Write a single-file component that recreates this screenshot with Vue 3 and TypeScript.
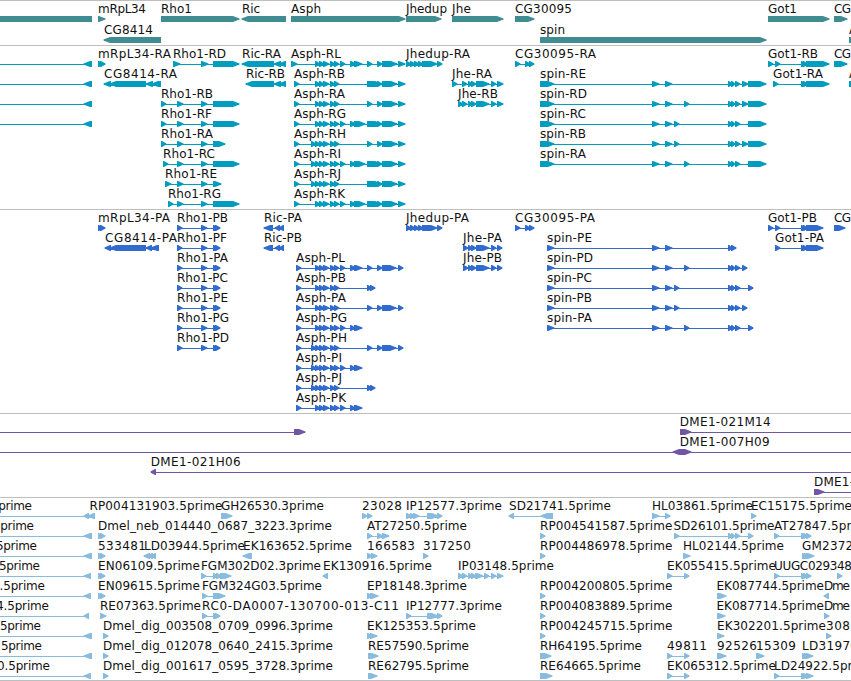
<template>
  <main class="browser">
    <section
      v-for="track in tracks"
      :key="track.name"
      class="track"
      :class="`track--${track.name}`"
    >
      <svg class="track__canvas" width="851" :height="track.height" :viewBox="`0 0 851 ${track.height}`">
        <g
          v-for="(feature, index) in track.features"
          :key="index"
          :transform="`translate(0 ${feature.row * track.pitch})`"
        >
          <path class="track__intron" :d="intron(feature)" />
          <path class="track__exon" :d="exons(feature)" />
          <text
            v-if="feature.label"
            class="track__label"
            :x="feature.textX"
            y="12"
            :textLength="feature.width"
          >{{ feature.label }}</text>
        </g>
      </svg>
    </section>
  </main>
</template>

<script setup lang="ts">
type Strand = '+' | '-' | '='

interface Feature {
  row: number
  label: string
  textX: number
  width: number
  strand: Strand
  blocks: number[][]
}

interface Track {
  name: string
  height: number
  pitch: number
  features: Feature[]
}

// advance widths of the 12px label font
const advances: Record<string, number> = {
  A: 8, B: 8, C: 8, D: 9, E: 8, F: 7, G: 9, H: 9, I: 4, J: 4, K: 8, L: 7, M: 10, N: 9,
  P: 7, R: 8, S: 8, T: 7, U: 9, d: 8, e: 7, g: 8, h: 8, i: 3, l: 3, m: 10, n: 8, b: 8,
  o: 7, p: 8, r: 5, s: 6, t: 5, u: 8, c: 7, '-': 5, '.': 4, _: 6
}

const measure = (label: string) =>
  [...label].reduce((sum, char) => sum + (advances[char] ?? 8), 0)

// blocks are written as "start~end start~end"
const f = (
  row: number,
  label: string,
  strand: Strand,
  blocks: string,
  width = measure(label),
  textX?: number
): Feature => {
  const parsed = blocks.split(' ').map(block => block.split('~').map(Number))
  return { row, label, strand, blocks: parsed, width, textX: textX ?? parsed[0][0] }
}

const intron = ({ blocks }: Feature) => `M${blocks[0][0]} 18.5H${blocks[blocks.length - 1][1]}`

const block = (start: number, end: number, strand: Strand) => {
  if (strand === '=') return `M${start} 15H${end}V21H${start}Z`
  const length = end - start
  const head = Math.min(length - 1, 6)
  if (strand === '+') {
    const neck = end - head
    return `M${start} 15H${neck}L${end + 0.5} 17.5V18.5L${neck} 21H${start}Z`
  }
  const neck = start + head
  return `M${end} 15H${neck}L${start - 0.5} 17.5V18.5L${neck} 21H${end}Z`
}

const exons = ({ blocks, strand }: Feature) =>
  blocks.map(([start, end]) => block(start, end, strand)).join('')

const genes = [
  f(0, '', '=', '-9~92'),
  f(0, 'mRpL34', '+', '98~105', 48),
  f(0, 'Rho1', '+', '161~239'),
  f(0, 'Ric', '-', '242~286'),
  f(0, 'Asph', '+', '291~405'),
  f(0, 'Jhedup', '+', '406~441', 41),
  f(0, 'Jhe', '+', '452~503'),
  f(0, 'CG30095', '+', '515~534'),
  f(0, 'Got1', '+', '768~829'),
  f(0, 'CG', '+', '834~847'),
  f(1, 'CG8414', '-', '104~161'),
  f(1, 'spin', '+', '540~766'),
  f(1, 'A', '+', '849~880')
]

const rhoTail = '177~183 201~207 213~239'
const asphCore = '315~320 319~324 323~329 330~335 334~339'
const asphEnd = '377~382 382~397 398~405'
const jheTail = '468~472 471~476 476~489 491~496 497~503'
const jhedup = '406~411 410~415 414~419 418~423 422~437 437~442'
const spinHead = '540~554 652~659 665~672'
const spinMid = '728~732 731~735 735~740'
const gotEnd = '801~805 803~807 806~829'

const transcripts = [
  ...[0, 1, 2, 3].map(row => f(row, '', '-', '-9~-2 84~92')),
  f(0, 'mRpL34-RA', '+', '98~103 100~105', 73),
  f(0, 'Rho1-RD', '+', '173~180 201~208 213~239'),
  f(0, 'Ric-RA', '-', '242~274 274~281 279~286'),
  f(0, 'Asph-RL', '+', `291~297 ${asphCore} 340~345 350~356 354~362 367~372 ${asphEnd}`),
  f(0, 'Jhedup-RA', '+', jhedup),
  f(0, 'CG30095-RA', '+', '515~520 525~530 529~534', 81),
  f(0, 'Got1-RB', '+', `768~773 775~780 ${gotEnd}`),
  f(0, 'CG', '+', '834~847'),
  f(1, 'CG8414-RA', '-', '104~111 110~146 146~153 152~161', 73),
  f(1, 'Ric-RB', '-', '246~274 274~281 279~286'),
  f(1, 'Asph-RB', '+', `294~299 ${asphCore} 367~381 ${asphEnd}`),
  f(1, 'Jhe-RA', '+', `452~457 462~467 ${jheTail}`),
  f(1, 'spin-RE', '+', `${spinHead} ${spinMid} 742~748 748~766`),
  f(1, 'Got1-RA', '+', `773~778 ${gotEnd}`),
  f(1, 'A', '+', '849~880'),
  f(2, 'Rho1-RB', '+', `161~166 ${rhoTail}`),
  f(2, 'Asph-RA', '+', `294~299 ${asphCore} 367~372 ${asphEnd}`),
  f(2, 'Jhe-RB', '+', `458~463 462~467 ${jheTail}`),
  f(2, 'spin-RD', '+', `${spinHead} 684~689 ${spinMid} 742~748 748~766`),
  f(3, 'Rho1-RF', '+', `161~166 ${rhoTail}`),
  f(3, 'Asph-RG', '+', `294~299 ${asphCore} 340~345 350~356 354~365 367~381 ${asphEnd}`),
  f(3, 'spin-RC', '+', `${spinHead} 674~679 ${spinMid} 748~766`),
  f(4, 'Rho1-RA', '+', '161~166 177~183 201~207 213~225'),
  f(4, 'Asph-RH', '+', `294~299 311~316 ${asphCore} 367~372 ${asphEnd}`),
  f(4, 'spin-RB', '+', `${spinHead} 674~679 ${spinMid} 742~748 748~766`),
  f(5, 'Rho1-RC', '+', `163~168 ${rhoTail}`),
  f(5, 'Asph-RI', '+', `294~299 311~316 ${asphCore} 340~345 350~356 354~365 367~381 ${asphEnd}`),
  f(5, 'spin-RA', '+', `${spinHead} 684~689 ${spinMid} 748~766`),
  f(6, 'Rho1-RE', '+', '165~171 177~183 201~207 213~221'),
  f(6, 'Asph-RJ', '+', `294~299 311~316 ${asphCore} 367~381 ${asphEnd}`),
  f(7, 'Rho1-RG', '+', `168~173 ${rhoTail}`),
  f(7, 'Asph-RK', '+', `294~299 ${asphCore} 340~345 350~356 354~365 367~381 ${asphEnd}`)
]

const asphCds = '377~382 382~396 398~403'
const jheCds = '463~468 468~472 471~476 476~489 491~496 497~502'
const spinCds = '547~554 652~659 665~672'
const gotCds = '801~805 803~807 806~823'

const proteins = [
  f(0, 'mRpL34-PA', '+', '98~103 100~105', 72),
  f(0, 'Ric-PA', '-', '264~273 275~280 279~284'),
  f(0, 'Jhedup-PA', '+', jhedup),
  f(0, 'CG30095-PA', '+', '515~520 525~530 529~534', 80),
  f(0, 'Got1-PB', '+', `768~773 775~780 ${gotCds}`),
  f(0, 'CG', '+', '834~845'),
  f(1, 'CG8414-PA', '-', '105~111 110~146 146~152 151~159', 72),
  f(1, 'Ric-PB', '-', '264~273 275~280 279~284'),
  f(1, 'Jhe-PA', '+', jheCds),
  f(1, 'spin-PE', '+', `${spinCds} 728~732 731~736`),
  f(1, 'Got1-PA', '+', `775~780 ${gotCds}`),
  ...['PB', 'PF', 'PA', 'PC', 'PE', 'PG', 'PD'].map((name, row) =>
    f(row, `Rho1-${name}`, '+', '177~182 201~207 213~218 215~220')
  ),
  f(2, 'Asph-PL', '+', `296~301 ${asphCore} 340~345 350~356 354~362 367~372 ${asphCds}`),
  f(2, 'Jhe-PB', '+', jheCds),
  f(2, 'spin-PD', '+', `${spinCds} 684~689 ${spinMid} 742~747`),
  f(3, 'Asph-PB', '+', `296~301 ${asphCore} 367~372 370~375`),
  f(3, 'spin-PC', '+', `${spinCds} 674~679 ${spinMid} 748~753`),
  f(4, 'Asph-PA', '+', `296~301 ${asphCore} 367~372 ${asphCds}`),
  f(4, 'spin-PB', '+', `${spinCds} 674~679 ${spinMid} 742~747`),
  f(5, 'Asph-PG', '+', `296~301 ${asphCore} 340~345 350~355 354~362`),
  f(5, 'spin-PA', '+', `${spinCds} 684~689 ${spinMid} 748~753`),
  f(6, 'Asph-PH', '+', `296~301 311~316 ${asphCore} 367~372 ${asphCds}`),
  f(7, 'Asph-PI', '+', `296~301 311~316 ${asphCore} 340~345 350~355 354~362`),
  f(8, 'Asph-PJ', '+', `296~301 311~316 ${asphCore} 367~372 370~375`),
  f(9, 'Asph-PK', '+', `296~301 ${asphCore} 340~345 350~355 354~362`)
]

const bacs = [
  f(0, '', '+', '-20~-10 294~305'),
  f(0, 'DME1-021M14', '+', '680~691 870~880', 91, 679.7),
  f(1, '', '-', '673~682'),
  f(1, 'DME1-007H09', '+', '-20~-10 680~691 870~880', 90, 679.7),
  f(2, 'DME1-021H06', '-', '151~156 870~880', 90, 150.7),
  f(3, 'DME1-', '+', '814~824 870~880')
]

const leftEnds = [32, 34, 37, 40, 45, 49, 41, 42, 50]
const leftLabels = ['5prime', '5prime', '5prime', '5prime', '1.5prime', '4.5prime', '5prime', '5prime', '0.5prime']
const leftTips = ['84~89 88~95', '84~92', '84~92', '84~91', '84~91', '84~89', '84~92', '84~92', '84~91']
const mrplTip = '98~103 100~105'

const ests = [
  ...leftLabels.map((label, row) =>
    f(row, label, '-', `-20~-10 ${leftTips[row]}`, measure(label), leftEnds[row] - measure(label))
  ),
  f(0, 'RP004131903.5prime', '-', '90~95', 133, 89.5),
  f(0, 'GH26530.3prime', '+', '221~232'),
  f(0, '23028', '+', '362~367 367~372'),
  f(0, 'IP12577.3prime', '+', '406~411 410~415 413~419 427~438 437~442'),
  f(0, 'SD21741.5prime', '-', '509~514 541~553'),
  f(0, 'HL03861.5prime', '+', '652~659 665~670'),
  f(0, 'EC15175.5prime', '+', '751~756'),
  f(1, 'Dmel_neb_014440_0687_3223.3prime', '+', mrplTip, 234),
  f(1, 'AT27250.5prime', '+', '367~372 377~383 382~389'),
  f(1, 'RP004541587.5prime', '+', '540~545', 132.5),
  f(1, 'SD26101.5prime', '+', '674~679 728~732 731~735 735~740 748~753', 101, 673.5),
  f(1, 'AT27847.5prime', '+', '774~779 801~805 803~808 806~811'),
  f(2, '533481', '+', mrplTip),
  f(2, 'LD03944.5prime', '-', '144~150 148~153 151~156'),
  f(2, 'EK163652.5prime', '-', '243~252'),
  f(2, '166583', '+', '367~373 371~377'),
  f(2, '317250', '+', '423~428'),
  f(2, 'RP004486978.5prime', '+', '540~545', 132.5),
  f(2, 'HL02144.5prime', '+', '683~690'),
  f(2, 'GM23721', '+', '802~806 804~809 806~814'),
  f(3, 'EN06109.5prime', '+', mrplTip),
  f(3, 'FGM302D02.3prime', '+', '201~206 213~218 216~222 220~231'),
  f(3, 'EK130916.5prime', '-', '323~328'),
  f(3, 'IP03148.5prime', '+', '458~463 462~467 468~472 471~476 475~483 484~489 491~496 497~503'),
  f(3, 'EK055415.5prime', '+', '667~672 684~689'),
  f(3, 'UUGC029348', '+', '774~779 801~805 803~808 806~811', 78),
  f(3, '', '+', '837~842'),
  f(4, 'EN09615.5prime', '+', mrplTip),
  f(4, 'FGM324G03.5prime', '+', '202~207 213~225'),
  f(4, 'EP18148.3prime', '+', '367~373 370~378'),
  f(4, 'RP004200805.5prime', '+', '540~545', 132.5),
  f(4, 'EK087744.5prime', '+', '717~726', 107.5, 716.5),
  f(4, 'Dme', '-', '824~829'),
  f(5, 'RE07363.5prime', '+', '100~106'),
  f(5, 'RC0-DA0007-130700-013-C11', '+', '202~207 213~218 215~220', 197),
  f(5, 'IP12777.3prime', '+', '406~411 427~438 437~442'),
  f(5, 'RP004083889.5prime', '+', '540~545', 132.5),
  f(5, 'EK087714.5prime', '+', '717~725', 107.5, 716.5),
  f(5, 'Dme', '+', '824~829'),
  f(6, 'Dmel_dig_003508_0709_0996.3prime', '+', '103~108', 230),
  f(6, 'EK125353.5prime', '+', '367~372 370~377'),
  f(6, 'RP004245715.5prime', '+', '540~545', 132.5),
  f(6, 'EK302201.5prime', '+', '717~724'),
  f(6, '308', '+', '826~831'),
  f(7, 'Dmel_dig_012078_0640_2415.3prime', '+', '103~108', 230),
  f(7, 'RE57590.5prime', '+', '368~378'),
  f(7, 'RH64195.5prime', '+', '540~551'),
  f(7, '49811', '+', '667~672 684~689'),
  f(7, '92526', '+', '717~726'),
  f(7, '15309', '+', '756~764'),
  f(7, 'LD31970', '+', '802~806 804~809 806~813'),
  f(8, 'Dmel_dig_001617_0595_3728.3prime', '+', '103~108', 230),
  f(8, 'RE62795.5prime', '+', '368~377'),
  f(8, 'RE64665.5prime', '+', '540~552'),
  f(8, 'EK065312.5prime', '+', '667~672 684~689'),
  f(8, 'LD24922.5prime', '+', '774~779 801~805 803~808 806~813')
]

const tracks: Track[] = [
  { name: 'genes', height: 44, pitch: 21, features: genes },
  { name: 'transcripts', height: 163, pitch: 20, features: transcripts },
  { name: 'proteins', height: 203, pitch: 20, features: proteins },
  { name: 'bacs', height: 83, pitch: 20, features: bacs },
  { name: 'ests', height: 182, pitch: 20, features: ests }
]
</script>

<style>
body {
  background: #fff;
}
</style>

<style scoped>
.browser {
  display: flex;
  flex-direction: column;
  width: 851px;
  height: 681px;
  overflow: hidden;
  background: #fff;
}

.track {
  border-top: 1px solid #bebebe;
}

.track:last-child {
  border-bottom: 1px solid #bebebe;
}

.track__canvas {
  display: block;
  overflow: hidden;
}

.track__exon {
  fill: currentColor;
}

.track__intron {
  stroke: currentColor;
  stroke-width: 1;
}

.track__label {
  font-family: "DejaVu Sans", sans-serif;
  font-size: 12px;
  fill: #111;
}

.track--genes {
  color: #408c93;
}

.track--transcripts {
  color: #009dbf;
}

.track--proteins {
  color: #316bce;
}

.track--bacs {
  color: #7256a6;
}

.track--ests {
  color: #88bbdd;
}
</style>
